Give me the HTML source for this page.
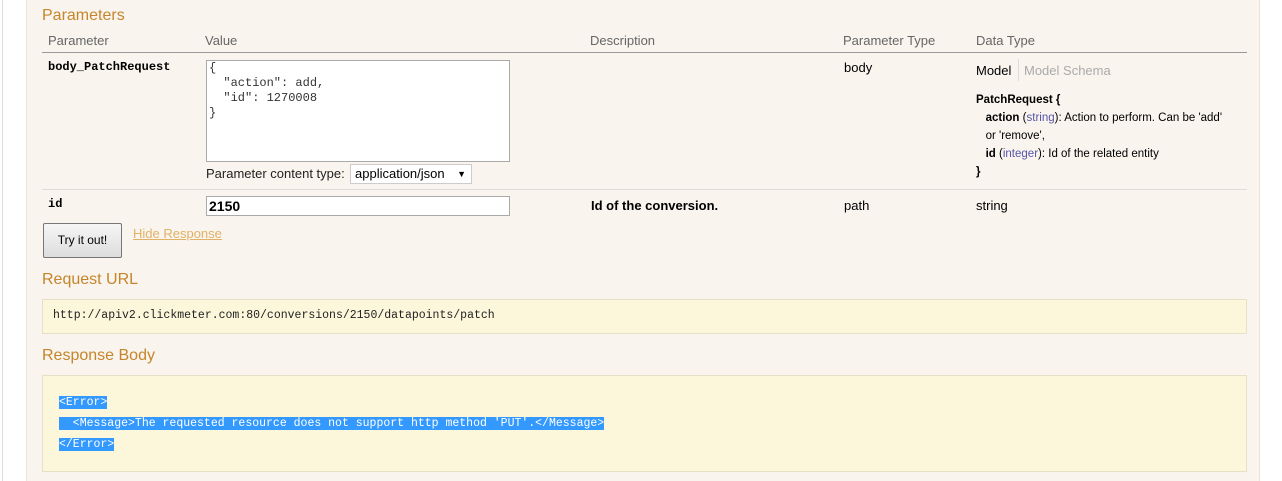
<!DOCTYPE html>
<html><head><style>
body{margin:0;width:1282px;height:481px;background:#fff;font-family:"Liberation Sans",sans-serif;position:relative;overflow:hidden}
.lb{position:absolute;left:2px;top:0;width:1px;height:481px;background:#ddd}
.panel{position:absolute;left:26px;top:0;width:1232px;height:481px;background:#f9f4ed;border-left:1px solid #ebe3d6;border-right:1px solid #ebe3d6}
.a{position:absolute;white-space:nowrap}
h3{margin:0;position:absolute;font-weight:normal;color:#c5862b;font-size:16px}
.th{color:#666;font-size:13px}
.line{position:absolute;left:42px;width:1205px;height:1px}
.mono{font-family:"Liberation Mono",monospace}
.b{font-weight:bold}
.box{position:absolute;left:42px;width:1203px;background:#fcf6db;border:1px solid #e5e0c6}
.sel{background:#3399ff;color:#fff}
pre.a{white-space:pre}
</style></head><body>
<div class="lb"></div>
<div class="panel"></div>
<h3 style="left:42px;top:7px">Parameters</h3>
<div class="a th" style="left:48px;top:33px">Parameter</div>
<div class="a th" style="left:205px;top:33px">Value</div>
<div class="a th" style="left:590px;top:33px">Description</div>
<div class="a th" style="left:843px;top:33px">Parameter Type</div>
<div class="a th" style="left:976px;top:33px">Data Type</div>
<div class="line" style="top:52px;background:#999"></div>
<div class="a mono b" style="left:48px;top:60px;font-size:12px;color:#000">body_PatchRequest</div>
<div class="a" style="left:206px;top:60px;width:302px;height:100px;background:#fff;border:1px solid #aaa"></div>
<pre class="a mono" style="left:209px;top:61px;margin:0;font-size:12px;line-height:15px;color:#333">{
  "action": add,
  "id": 1270008
}</pre>
<div class="a" style="left:206px;top:166px;font-size:13px;color:#222">Parameter content type:</div>
<div class="a" style="left:350px;top:164px;width:120px;height:18px;background:#fff;border:1px solid #ccc;font-size:13px;line-height:18px;text-indent:4px">application/json <span style="font-size:9px;position:absolute;right:5px">▼</span></div>
<div class="a" style="left:844px;top:60px;font-size:13px">body</div>
<div class="a" style="left:976px;top:63px;font-size:13px">Model</div>
<div class="a" style="left:1018px;top:59px;width:1px;height:22px;background:#ddd"></div>
<div class="a" style="left:1024px;top:63px;font-size:13px;color:#aaa">Model Schema</div>
<div class="a" style="left:976px;top:91px;font-size:11.5px;line-height:18px;color:#000">
<b>PatchRequest {</b><br>
&nbsp;&nbsp;&nbsp;<b>action</b> (<span style="color:#55a">string</span>): Action to perform. Can be 'add'<br>
&nbsp;&nbsp;&nbsp;or 'remove',<br>
&nbsp;&nbsp;&nbsp;<b>id</b> (<span style="color:#55a">integer</span>): Id of the related entity<br>
<b>}</b></div>
<div class="line" style="top:189px;background:#ddd"></div>
<div class="a mono b" style="left:48px;top:197px;font-size:12px">id</div>
<div class="a" style="left:206px;top:196px;width:302px;height:18px;background:#fff;border:1px solid #aaa;font-weight:bold;font-size:14px;line-height:18px;text-indent:2px">2150</div>
<div class="a b" style="left:591px;top:198px;font-size:13px">Id of the conversion.</div>
<div class="a" style="left:844px;top:198px;font-size:13px">path</div>
<div class="a" style="left:976px;top:198px;font-size:13px">string</div>
<div class="a" style="left:43px;top:223px;width:77px;height:33px;border:1px solid #777;border-radius:2px;background:linear-gradient(#f6f6f6,#ddd);font-size:12px;text-align:center;line-height:33px">Try it out!</div>
<div class="a" style="left:133px;top:226px;font-size:13px;color:#e0b266;text-decoration:underline">Hide Response</div>
<h3 style="left:42px;top:271px">Request URL</h3>
<div class="box" style="top:299px;height:33px"></div>
<div class="a mono" style="left:53px;top:309px;font-size:11.5px;color:#222">http://apiv2.clickmeter.com:80/conversions/2150/datapoints/patch</div>
<h3 style="left:42px;top:347px">Response Body</h3>
<div class="box" style="top:375px;height:95px"></div>
<pre class="a mono" style="left:59px;top:392px;margin:0;font-size:11.5px;line-height:21px;color:#fff"><span class="sel">&lt;Error&gt;</span>
<span class="sel">  &lt;Message&gt;The requested resource does not support http method 'PUT'.&lt;/Message&gt;</span>
<span class="sel">&lt;/Error&gt;</span></pre>
</body></html>
